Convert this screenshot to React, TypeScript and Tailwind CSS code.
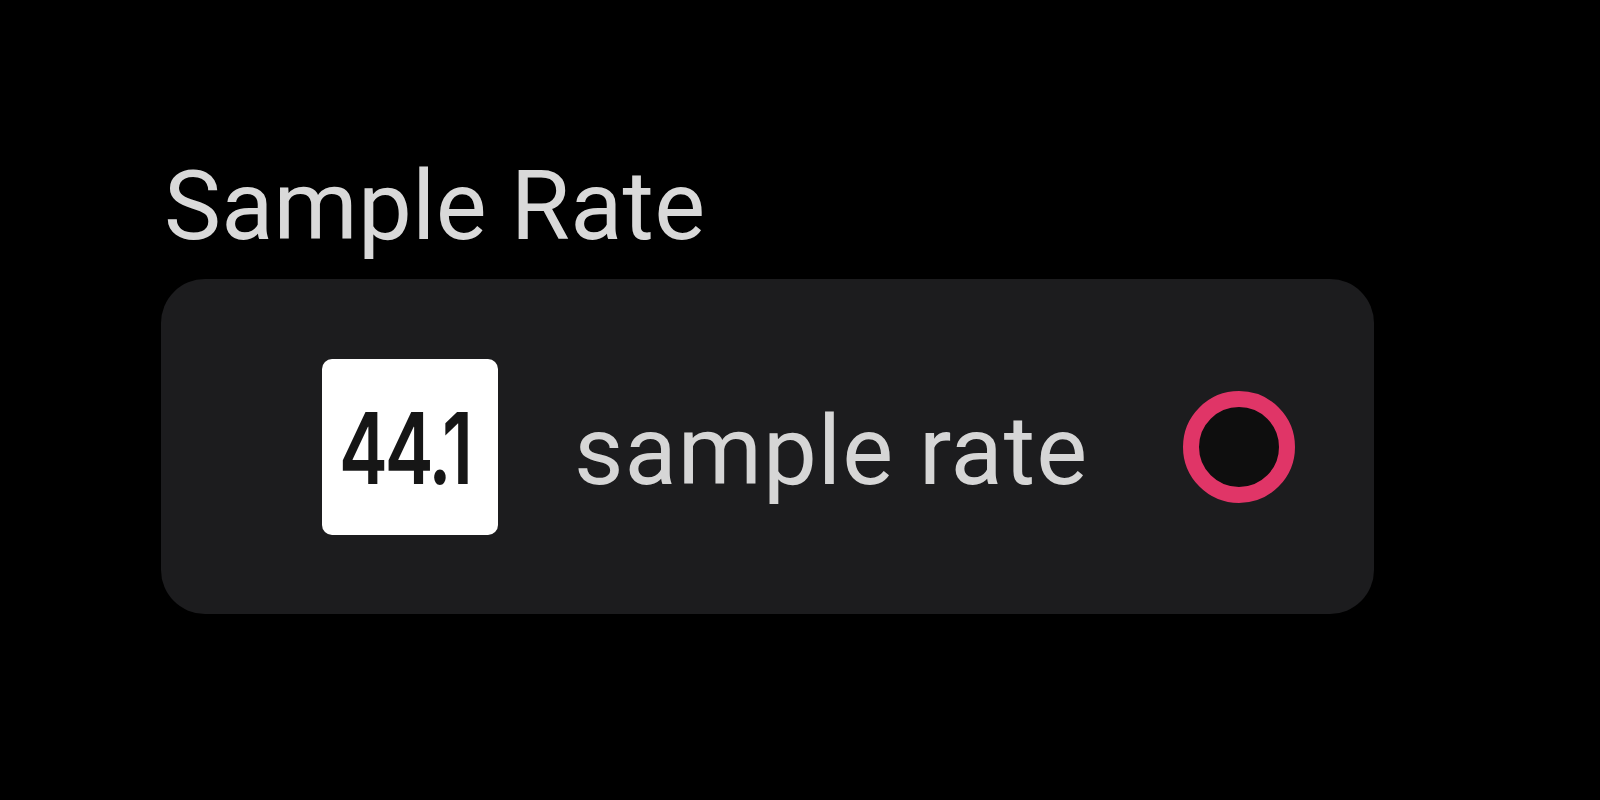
import React from "react";

export default function App() {
  return (
    <div
      className="w-full h-[800px] bg-black overflow-hidden"
      style={{ fontFamily: "Roboto, 'Noto Sans', sans-serif" }}
    >
      <div className="pt-[158px] pl-[161px]">
        <div className="pl-[3px] text-[96px] leading-[96px] text-[#d9d9d9] font-normal tracking-[0.2px]">
          Sample Rate
        </div>
        <div className="mt-[25px] w-[1213px] h-[335px] rounded-[44px] bg-[#1c1c1e] flex items-center pl-[161px] pr-[79px]">
          <div className="w-[176px] h-[176px] rounded-[10px] bg-white flex items-center justify-center shrink-0">
            <div
              className="text-[#161616] font-semibold text-[99px] leading-none scale-x-[0.74] tracking-[-4px] mt-[4px] mr-[10px] whitespace-nowrap"
              style={{ fontFamily: "Inter, Roboto, sans-serif" }}
            >
              44.1
            </div>
          </div>
          <div className="ml-[76px] pt-[8px] text-[96px] leading-[96px] text-[#d6d6d6] whitespace-nowrap tracking-[1px]">
            sample rate
          </div>
          <div className="ml-auto w-[112px] h-[112px] rounded-full border-[16px] border-[#e03567] bg-[#0e0e0e] shrink-0" />
        </div>
      </div>
    </div>
  );
}
